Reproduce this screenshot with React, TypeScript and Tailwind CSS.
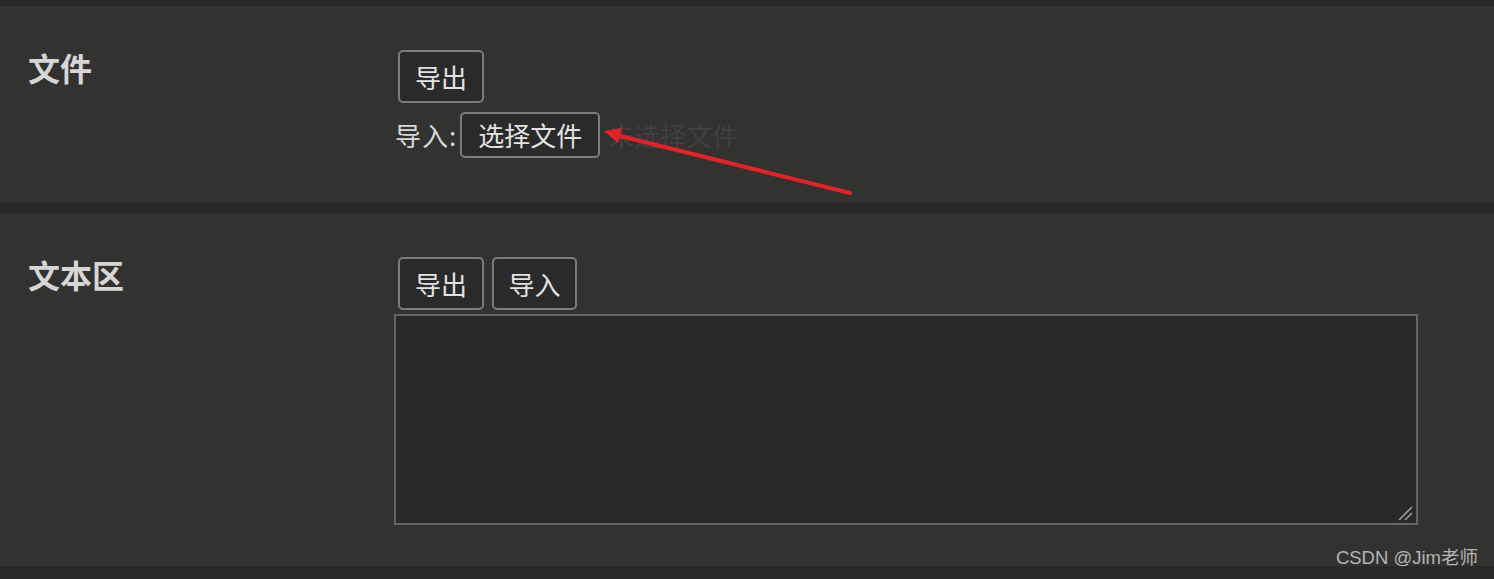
import React from "react";

const font = { fontFamily: '"Noto Sans CJK SC", "Noto Sans", sans-serif' };

function Btn({ children, className = "" }: { children: React.ReactNode; className?: string }) {
  return (
    <button
      className={
        "border-2 border-[#7c7c7c] rounded-[5px] bg-[#2a2a2a] text-[#e2e2e2] text-[26px] " +
        className
      }
      style={font}
    >
      {children}
    </button>
  );
}

export default function App() {
  return (
    <div className="relative w-[1494px] h-[579px] bg-[#282828] pt-[6px] overflow-hidden" style={font}>
      {/* panel 1 */}
      <div className="flex h-[197px] bg-[#323231]">
        <div className="w-[394px] shrink-0 pl-[28px] pt-[38px]">
          <div className="text-[32px] font-bold leading-[46px] text-[#d6d6d6]">文件</div>
        </div>
        <div className="flex flex-col items-start pt-[44px]">
          <Btn className="ml-[4px] h-[53px] px-[15px] leading-[37px]">导出</Btn>
          <div className="mt-[9px] flex items-center">
            <span className="text-[26px] text-[#d8d8d8] leading-[46px] ml-[1px] tracking-[1px]">导入:</span>
            <Btn className="ml-[3px] h-[46px] px-[16px] leading-[38px]">选择文件</Btn>
            <span className="ml-[8px] text-[26px] text-[#404040] leading-[46px]">未选择文件</span>
          </div>
        </div>
      </div>
      <div className="h-[10px]" />
      {/* panel 2 */}
      <div className="flex h-[353px] bg-[#323231]">
        <div className="w-[394px] shrink-0 pl-[28px] pt-[38px]">
          <div className="text-[32px] font-bold leading-[46px] text-[#d6d6d6]">文本区</div>
        </div>
        <div className="flex flex-col items-start pt-[44px]">
          <div className="flex gap-[8px] ml-[4px]">
            <Btn className="h-[53px] w-[86px] leading-[37px]">导出</Btn>
            <Btn className="h-[53px] w-[85px] leading-[37px]">导入</Btn>
          </div>
          <div className="relative mt-[4px]">
            <textarea className="block w-[1024px] h-[211px] bg-[#292929] border-2 border-[#646464] resize-none outline-none" />
            <svg className="absolute right-[4px] bottom-[3px]" width="17" height="17" viewBox="0 0 17 17">
              <line x1="2" y1="15" x2="15" y2="2" stroke="#a0a0a0" strokeWidth="1.5" />
              <line x1="8" y1="15" x2="15" y2="8" stroke="#a0a0a0" strokeWidth="1.5" />
            </svg>
          </div>
        </div>
      </div>
      {/* arrow annotation */}
      <svg className="absolute left-0 top-0 pointer-events-none" width="1494" height="579">
        <line x1="850" y1="193" x2="616" y2="135" stroke="#e5222a" strokeWidth="4" strokeLinecap="round" />
        <polygon points="604,131 622,128 618,143" fill="#e5222a" />
      </svg>
      <div
        className="absolute right-[16px] top-[545px] text-[18.5px] text-[#b4b4b4] leading-[26px]"
        style={{ fontFamily: '"Liberation Sans", "Noto Sans CJK SC", sans-serif' }}
      >
        CSDN @Jim老师
      </div>
    </div>
  );
}
